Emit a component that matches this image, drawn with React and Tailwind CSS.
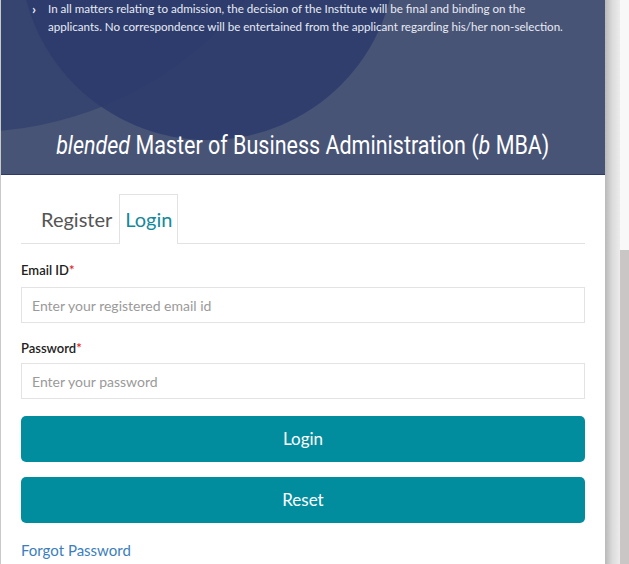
import React from "react";

const body = { fontFamily: "Lato, 'Open Sans', sans-serif" };
const title = { fontFamily: "Roboto, 'Liberation Sans', sans-serif" };

export default function App() {
  return (
    <div className="flex h-[564px] w-[629px] overflow-hidden bg-white" style={body}>
      <div className="flex w-[605px] shrink-0 flex-col border-l border-[#c9c9c9] bg-white">
        <div className="relative h-[175px] shrink-0 overflow-hidden border-b border-[#2f3b66] bg-[#485476]">
          <div className="absolute left-[-382px] top-[-572px] h-[704px] w-[704px] rounded-full bg-[#2b3b6c]/60" />
          <div className="absolute left-[19px] top-[-236px] h-[376px] w-[376px] rounded-full bg-[#2b3b6c]/85" />
          <div className="relative flex flex-col">
            <div className="flex pl-[31px] text-[11.6px] leading-[18px] text-[#e8ebf3]">
              <span className="w-[16px] shrink-0 text-[14px] font-bold leading-[17px]">›</span>
              <span className="flex flex-col whitespace-nowrap">
                <span>In all matters relating to admission, the decision of the Institute will be final and binding on the</span>
                <span>applicants. No correspondence will be entertained from the applicant regarding his/her non-selection.</span>
              </span>
            </div>
            <div className="mt-[95px] flex justify-center">
              <h1 className="origin-center scale-x-[0.86] whitespace-nowrap text-[25px] leading-[30px] text-white" style={title}>
                <i>blended</i> Master of Business Administration (<i>b</i> MBA)
              </h1>
            </div>
          </div>
        </div>
        <div className="flex flex-col pl-[20px] pr-[20px] pt-[19px]">
          <div className="flex items-end border-b border-[#e2e2e2] pl-[20px]">
            <div className="pb-[10px] pr-[7px] text-[20px] leading-[28px] text-[#555]">Register</div>
            <div className="-mb-px border border-b-0 border-[#e2e2e2] bg-white px-[5px] pb-[11px] pt-[10px] text-[20px] leading-[28px] text-[#14899a]">Login</div>
          </div>
          <label className="mt-[17px] text-[13px] font-semibold leading-[18px] text-[#222]">
            Email ID<span className="text-[#e21b1b]">*</span>
          </label>
          <div className="mt-[8px] flex h-[36px] items-center border border-[#e3e3e3] px-[10px] text-[14px] text-[#9a9a9a]">
            Enter your registered email id
          </div>
          <label className="mt-[16px] text-[13px] font-semibold leading-[18px] text-[#222]">
            Password<span className="text-[#e21b1b]">*</span>
          </label>
          <div className="mt-[6px] flex h-[36px] items-center border border-[#e3e3e3] px-[10px] text-[14px] text-[#9a9a9a]">
            Enter your password
          </div>
          <button className="mt-[17px] flex h-[46px] items-center justify-center rounded-[5px] bg-[#028d9f] text-[17px] text-white">
            Login
          </button>
          <button className="mt-[15px] flex h-[46px] items-center justify-center rounded-[5px] bg-[#028d9f] text-[17px] text-white">
            Reset
          </button>
          <a className="mt-[17px] text-[15px] leading-[20px] text-[#3c7ebd]">Forgot Password</a>
        </div>
      </div>
      <div className="h-full w-[15px] shrink-0 bg-gradient-to-r from-[#b9b9b9] via-[#dcdcdc] to-[#ececec]" />
      <div className="flex h-full w-[9px] shrink-0 flex-col bg-[#f8f8f8]">
        <div className="mt-[250px] flex-1 bg-[#cbc6c6]" />
      </div>
    </div>
  );
}
